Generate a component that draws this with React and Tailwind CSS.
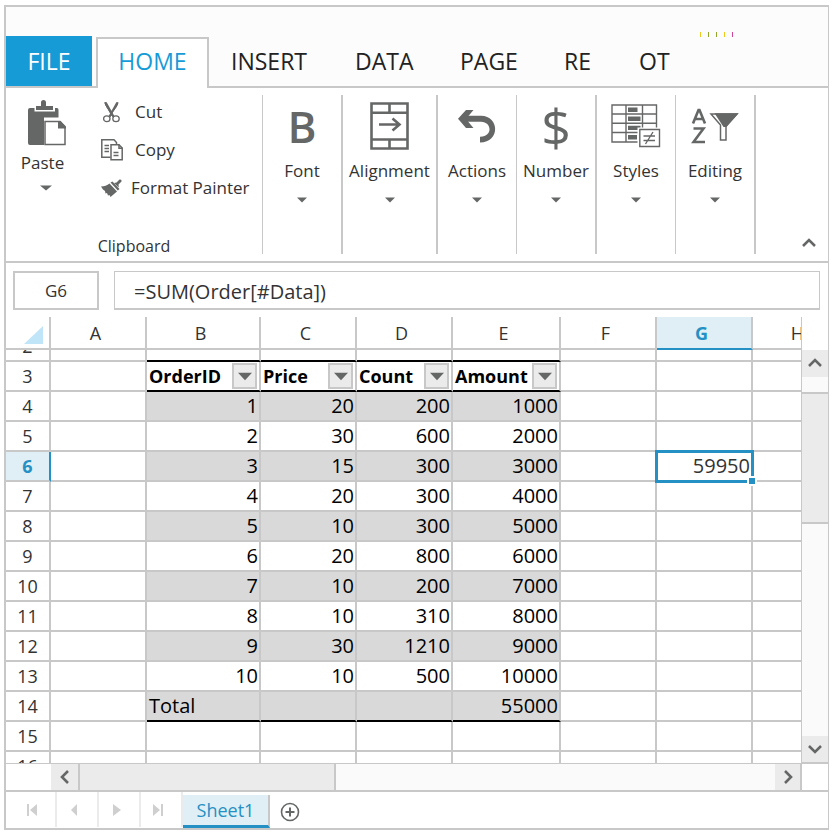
import React from "react";

const COLUMNS = ["A", "B", "C", "D", "E", "F", "G", "H"];

const ORDERS = [
  [1, 20, 200, 1000],
  [2, 30, 600, 2000],
  [3, 15, 300, 3000],
  [4, 20, 300, 4000],
  [5, 10, 300, 5000],
  [6, 20, 800, 6000],
  [7, 10, 200, 7000],
  [8, 10, 310, 8000],
  [9, 30, 1210, 9000],
  [10, 10, 500, 10000],
];

const HEADINGS = ["OrderID", "Price", "Count", "Amount"];

function DownArrow({ className }) {
  return (
    <svg viewBox="0 0 12 7" preserveAspectRatio="none" className={className} fill="#656766" aria-hidden="true">
      <path d="M0 0.5H12L6 6.5Z" />
    </svg>
  );
}

function Chevron({ d }) {
  return (
    <svg viewBox="0 0 14 14" className="size-[14px]" fill="none" stroke="#656766" strokeWidth="2.6" aria-hidden="true">
      <path d={d} />
    </svg>
  );
}

const PasteIcon = () => (
  <svg viewBox="0 0 40 47" className="h-[47px] w-10" fill="#656766" aria-hidden="true">
    <path d="M3 8H7.500V11.500H28V8H30Q31.500 8 31.500 10V17.500H17V45H3Q1 45 1 43V10Q1 8 3 8Z" />
    <path d="M9 6H14V2.500Q14 0 16.500 0Q19 0 19 2.500V6H26V10H9Z" />
    <path d="M18 21.500H33L38 26.500V44.500H18Z" fill="#fff" stroke="#656766" strokeWidth="1.500" />
    <path d="M31 21H33.500L39 27V28.500H31Z" />
  </svg>
);

const CutIcon = () => (
  <svg viewBox="0 0 22 24" className="h-6 w-[22px]" fill="none" stroke="#656766" aria-hidden="true">
    <path d="M4.200 2Q3.500 5 9.500 12L13 17L11 16L4.200 4ZM16.800 2Q17.500 5 11.500 12L9 17" fill="#656766" strokeWidth="1" />
    <path d="M16.300 2.500L8.500 16.500M4.700 2.500L12.500 16.500" strokeWidth="2" />
    <ellipse cx="5.800" cy="18.800" rx="3.200" ry="2.900" strokeWidth="1.300" />
    <ellipse cx="15" cy="18.800" rx="3.200" ry="2.900" strokeWidth="1.300" />
  </svg>
);

const CopyIcon = () => (
  <svg viewBox="0 0 22 24" className="h-6 w-[22px]" fill="none" stroke="#656766" strokeWidth="1.500" aria-hidden="true">
    <path d="M9.500 19.200H0.800V1.800H13L15.500 4.500V6" />
    <path d="M3.500 7.500H8M3.500 10.500H8M3.500 13.500H8" />
    <path d="M10 6.800H18L21.200 10V21.800H10Z" fill="#fff" />
    <path d="M18 6.500V10.200H21.500M12.500 14.500H17.500M12.500 17.500H17.500" />
  </svg>
);

const BrushIcon = () => (
  <svg viewBox="0 0 22 20" className="h-5 w-[22px]" fill="#656766" aria-hidden="true">
    <path d="M0 8.500Q5 8.500 8.500 5.500L16 13.500L9.500 19L8.500 17L7 17.500L6 15L4.500 15.500L4 13L2 11.500Z" />
    <path d="M9.500 4.500L11.500 3.500L18.500 11L16.800 12.500Z" />
    <path d="M13 5L15.500 4.500L18.500 1.500Q21 1 20.500 3.500L17.500 6.500L17.800 9.500Z" />
  </svg>
);

const AlignIcon = () => (
  <svg viewBox="0 0 39 48" className="h-12 w-[39px]" fill="none" stroke="#656766" strokeWidth="2.600" aria-hidden="true">
    <path d="M1.500 1.500H37.500V46.500H1.500ZM1.500 10.800H37.500M1.500 37.500H37.500M19.500 1.500V10.800M19.500 37.500V46.500" />
    <path d="M9 22.500H30M22.500 16.500L29.500 22.500L22.500 28.500" />
  </svg>
);

const UndoIcon = () => (
  <svg viewBox="0 0 38 34" className="h-[34px] w-[38px]" fill="#656766" aria-hidden="true">
    <path d="M8 6.700H23C42 7 42 33.500 22 33.400V27.700C35 28 34 12.800 23 12.800H8Z" />
    <path d="M0 9.800L8 1H15.500L10 7.500V12.500L15.500 19H8Z" />
  </svg>
);

const StylesIcon = () => (
  <svg viewBox="0 0 50 44" className="h-11 w-[50px]" aria-hidden="true">
    <path d="M1 1H45.500V38H1ZM1 10H45.500M1 19.200H45.500M1 28.500H45.500M15 1V38M31.500 1V38" fill="none" stroke="#656766" strokeWidth="1.400" />
    <path d="M17 3.500H26.500V8H17ZM17 12.500H29.500V17H17ZM17 21.800H29.500V26H17ZM17 31H26V35.500H17Z" fill="#656766" />
    <path d="M26.500 23.500H50V44H26.500Z" fill="#fff" />
    <path d="M28.800 25.500H48.500V42.500H28.800ZM32.500 32H44M32.500 36.500H44M42 28L34.500 40" fill="none" stroke="#656766" strokeWidth="1.400" />
  </svg>
);

const EditingIcon = () => (
  <svg viewBox="0 0 48 36" className="h-9 w-12" aria-hidden="true">
    <path d="M2 15.500L7.500 2H8.500L14 15.500M4 11H12M2.500 20.500H12.500L2.500 34H14" fill="none" stroke="#656766" strokeWidth="2.600" />
    <path d="M20 6L29.500 17V32H35V18L46 6Z" fill="#fff" stroke="#656766" strokeWidth="1.500" />
    <path d="M23.500 5.200H47.500L35.500 19H32.500Z" fill="#656766" />
  </svg>
);

function RibbonGroup({ icon, label, className }) {
  return (
    <button type="button" className={"flex h-[159px] shrink-0 flex-col items-center border-[#c8c8c8] " + className}>
      <span className="flex h-[62px] items-center justify-center">{icon}</span>
      <span className="text-[17px] leading-7">{label}</span>
      <DownArrow className="mt-3 h-[6px] w-[10px]" />
    </button>
  );
}

const SmallCommand = ({ icon, label, className }) => (
  <button type="button" className={"flex h-[38px] items-center text-[17px] " + className}>
    {icon}
    <span>{label}</span>
  </button>
);

const LINE = "border-[#c8c8c8]";

function cellFor(row, col) {
  const inTable = col >= 1 && col <= 4;
  let content = null;
  let style = LINE;
  if (inTable && row === 2) style = "border-r-[#c8c8c8] border-b-black";
  if (inTable && row === 3) {
    style = "border-r-[#c8c8c8] border-b-black text-[18px] font-bold";
    content = (
      <div className="flex items-center justify-between pl-[2px] pr-[2px]">
        <span>{HEADINGS[col - 1]}</span>
        <button type="button" aria-label={"Filter " + HEADINGS[col - 1]} className="flex h-[26px] w-[25px] shrink-0 items-center justify-center border-2 border-[#c8c8c8] bg-[#ebebeb]">
          <DownArrow className="h-[9px] w-[14px]" />
        </button>
      </div>
    );
  }
  if (inTable && row >= 4 && row <= 13) {
    style = LINE + " pr-px text-right" + (row % 2 === 0 ? " bg-[#d9d9d9]" : "");
    content = ORDERS[row - 4][col - 1];
  }
  if (inTable && row === 14) {
    style = "border-r-[#c8c8c8] border-b-black bg-[#d9d9d9]" + (col === 1 ? " pl-[2px]" : " pr-px text-right");
    content = col === 1 ? "Total" : col === 4 ? "55000" : null;
  }
  if (row === 6 && col === 6) {
    style = LINE + " relative pr-px text-right text-[#333]";
    content = (
      <>
        59950
        <span className="absolute -top-[2px] -right-[3px] -bottom-[3px] -left-[2px] border-[3px] border-[#2590c4]" />
        <span className="absolute -right-[6px] -bottom-[6px] size-[10px] border-2 border-white bg-[#2590c4]" />
      </>
    );
  }
  return (
    <td key={col} className={"border-r-2 border-b-2 p-0 " + style}>
      {content}
    </td>
  );
}

function Sheet() {
  const rows = [2, 3, 4, 5, 6, 7, 8, 9, 10, 11, 12, 13, 14, 15, 16];
  return (
    <div className="h-[446px] min-w-0 flex-1 overflow-hidden border-r border-[#c8c8c8]">
      <table className="w-full min-w-[843px] table-fixed border-separate border-spacing-0 text-[20px] leading-7 text-black">
        <colgroup>
          <col className="w-[45px]" />
          {COLUMNS.map((c) => (
            <col key={c} className={c === "B" ? "w-[114px]" : c === "E" ? "w-[108px]" : "w-24"} />
          ))}
          <col />
        </colgroup>
        <thead>
          <tr className="h-[33px] text-[18px] text-[#333]">
            <th className="border-r-2 border-b-2 border-[#c8c8c8] p-0" aria-label="Select all">
              <svg viewBox="0 0 19 18" className="mt-1 ml-[18px] h-[18px] w-[19px]" fill="#c1e5f8" aria-hidden="true">
                <path d="M19 0V18H0Z" />
              </svg>
            </th>
            {COLUMNS.map((c) => (
              <th
                key={c}
                className={
                  c === "G"
                    ? "border-r-2 border-b-2 border-r-[#c8c8c8] border-b-[#2590c4] bg-[#e0eef5] py-0 pr-[5px] pl-0 font-bold text-[#2590c4]"
                    : "border-r-2 border-b-2 border-[#c8c8c8] py-0 pr-[5px] pl-0 font-normal"
                }
              >
                {c}
              </th>
            ))}
            <td className="border-b-2 border-[#c8c8c8] p-0" />
          </tr>
        </thead>
        <tbody>
          {rows.map((r) => (
            <tr key={r} className={r === 2 ? "h-3" : "h-[30px]"}>
              <th
                className={
                  r === 6
                    ? "border-r-2 border-b-2 border-r-[#2590c4] border-b-[#c8c8c8] bg-[#e0eef5] p-0 text-[18px] font-bold text-[#2590c4]"
                    : "border-r-2 border-b-2 border-[#c8c8c8] p-0 text-[18px] font-normal text-[#333]"
                }
              >
                {r === 2 ? (
                  <div className="flex h-[10px] items-end justify-center overflow-hidden">
                    <span>2</span>
                  </div>
                ) : (
                  r
                )}
              </th>
              {COLUMNS.map((_, i) => cellFor(r, i))}
              <td className="border-b-2 border-[#c8c8c8] p-0" />
            </tr>
          ))}
        </tbody>
      </table>
    </div>
  );
}

const NAV = [
  ["First sheet", "M2 1V13H4V1ZM12 1V13L5 7Z"],
  ["Previous sheet", "M10 1V13L4 7Z"],
  ["Next sheet", "M4 1V13L12 7Z"],
  ["Last sheet", "M2 1V13L9 7ZM10 1V13H12V1Z"],
];

const TAB = "h-[50px] shrink-0 text-left";

export default function App() {
  return (
    <div className="bg-white pt-[5px] pr-[3px] pb-[2px] pl-1 font-['Open_Sans','Noto_Sans',sans-serif] text-[#333]">
      <div className="border-2 border-r border-[#c8c8c8]">
        <header className="flex h-[81px] items-end border-b-2 border-[#c8c8c8] bg-[#fcfcfc]">
          <nav className="-mb-[2px] flex min-w-0 flex-1 items-end overflow-hidden pb-[2px] text-[23px] text-[#222]">
            <button type="button" className="mr-1 h-[50px] w-[86px] shrink-0 bg-[#179bd7] text-white">FILE</button>
            <button type="button" className="-mb-[2px] h-[51px] w-[113px] shrink-0 border-2 border-b-0 border-[#c8c8c8] bg-white pb-1 text-[#179bd7]">HOME</button>
            <button type="button" className={TAB + " w-[124px] pl-[22px]"}>INSERT</button>
            <button type="button" className={TAB + " w-[105px] pl-[22px]"}>DATA</button>
            <button type="button" className={TAB + " w-[104px] pl-[22px]"}>PAGE</button>
            <button type="button" className={TAB + " w-[75px] pl-[22px]"}>RE</button>
            <button type="button" className={TAB + " w-[83px] pl-[22px]"}>OT</button>
            <div className="mb-[49px] flex h-[5px] gap-[7px]">
              <span className="w-px bg-[#efc819]" />
              <span className="w-px bg-[#8fa82c]" />
              <span className="w-px bg-[#8fa82c]" />
              <span className="w-px bg-[#efc819]" />
              <span className="w-px bg-[#d0459b]" />
            </div>
          </nav>
        </header>

        <section aria-label="Home ribbon" className="flex h-[175px] border-b-2 border-[#c8c8c8] pt-[7px]">
          <div className="flex h-[159px] w-[257px] shrink-0 flex-col border-r border-[#c8c8c8]">
            <div className="flex h-[145px]">
              <button type="button" className="flex w-[73px] flex-col items-center pt-[5px]">
                <span className="pl-[9px]"><PasteIcon /></span>
                <span className="mt-[2px] text-[17px] leading-7">Paste</span>
                <DownArrow className="mt-2 ml-[6px] h-[6px] w-3" />
              </button>
              <div className="-mt-[2px] flex flex-col items-start pl-[22px]">
                <SmallCommand icon={<CutIcon />} label="Cut" className="gap-3" />
                <SmallCommand icon={<CopyIcon />} label="Copy" className="gap-3" />
                <SmallCommand icon={<BrushIcon />} label="Format Painter" className="gap-2" />
              </div>
            </div>
            <div className="text-center text-[16px] leading-4">Clipboard</div>
          </div>
          <RibbonGroup label="Font" className="w-20 border-r-2" icon={<span className="text-[44px] leading-none font-semibold text-[#656766]">B</span>} />
          <RibbonGroup label="Alignment" className="w-[95px] border-r-2" icon={<AlignIcon />} />
          <RibbonGroup label="Actions" className="w-[79px] border-r" icon={<UndoIcon />} />
          <RibbonGroup label="Number" className="w-20 border-r-2" icon={<span className="text-[52px] leading-none font-medium text-[#656766]">$</span>} />
          <RibbonGroup label="Styles" className="w-[79px] border-r" icon={<StylesIcon />} />
          <RibbonGroup label="Editing" className="w-20 border-r-2" icon={<EditingIcon />} />
          <button type="button" aria-label="Collapse ribbon" className="mr-3 mb-[11px] ml-auto self-end">
            <Chevron d="M1 10L7 4L13 10" />
          </button>
        </section>

        <div className="flex gap-[15px] pt-2 pr-2 pb-[7px] pl-[7px]">
          <input aria-label="Name box" defaultValue="G6" className="h-[39px] w-[86px] border-2 border-[#c8c8c8] bg-white text-center text-[17px] outline-none" />
          <input aria-label="Formula" defaultValue="=SUM(Order[#Data])" className="h-[39px] min-w-0 flex-1 border border-b-2 border-[#c8c8c8] bg-white pt-[2px] pl-[19px] text-[20px] outline-none" />
        </div>

        <div className="flex">
          <Sheet />
          <div className="flex w-[26px] shrink-0 flex-col border-b border-[#c8c8c8] bg-[#fafafa]">
            <div className="h-[33px] bg-white" />
            <button type="button" aria-label="Scroll up" className="flex h-[27px] items-center justify-center bg-[#ebebeb]"><Chevron d="M1 9L7 3L13 9" /></button>
            <div className="mt-[15px] h-[132px] border-y-2 border-[#c8c8c8] bg-[#ebebeb]" />
            <button type="button" aria-label="Scroll down" className="mt-auto flex h-[26px] items-center justify-center bg-[#ebebeb]"><Chevron d="M1 4L7 10L13 4" /></button>
          </div>
        </div>

        <div className="flex h-[29px] border-t border-b-2 border-[#c8c8c8] bg-[#fafafa]">
          <div className="w-[45px] bg-white" />
          <button type="button" aria-label="Scroll left" className="flex w-[27px] items-center justify-center bg-[#ebebeb]"><Chevron d="M10 1L4 7L10 13" /></button>
          <div className="w-[258px] border-x-2 border-[#c8c8c8] bg-[#ebebeb]" />
          <button type="button" aria-label="Scroll right" className="ml-auto flex w-[27px] items-center justify-center border-r-2 border-[#c8c8c8] bg-[#ebebeb]"><Chevron d="M4 1L10 7L4 13" /></button>
          <div className="w-[26px] bg-white" />
        </div>

        <footer className="flex h-9">
          <div className="flex h-[35px] pl-[9px]">
            {NAV.map(([label, d]) => (
              <button key={label} type="button" aria-label={label} className="flex w-[42px] items-center justify-center border-r-2 border-[#ebebeb] pr-[6px]">
                <svg viewBox="0 0 14 14" className="size-[14px]" fill="#cfcfcf" aria-hidden="true"><path d={d} /></svg>
              </button>
            ))}
          </div>
          <button type="button" className="mt-[3px] h-[33px] w-[87px] border-r-2 border-b-[3px] border-r-[#c8c8c8] border-b-[#2590c4] bg-[#e0eef5] text-[18px] leading-7 text-[#2590c4]">Sheet1</button>
          <button type="button" aria-label="New sheet" className="mt-1 ml-[10px]">
            <svg viewBox="0 0 20 20" className="size-5" fill="none" stroke="#656766" strokeWidth="1.600" aria-hidden="true">
              <circle cx="10" cy="10" r="8.500" />
              <path d="M10 5.500V14.500M5.500 10H14.500" strokeWidth="2" />
            </svg>
          </button>
        </footer>
      </div>
    </div>
  );
}
